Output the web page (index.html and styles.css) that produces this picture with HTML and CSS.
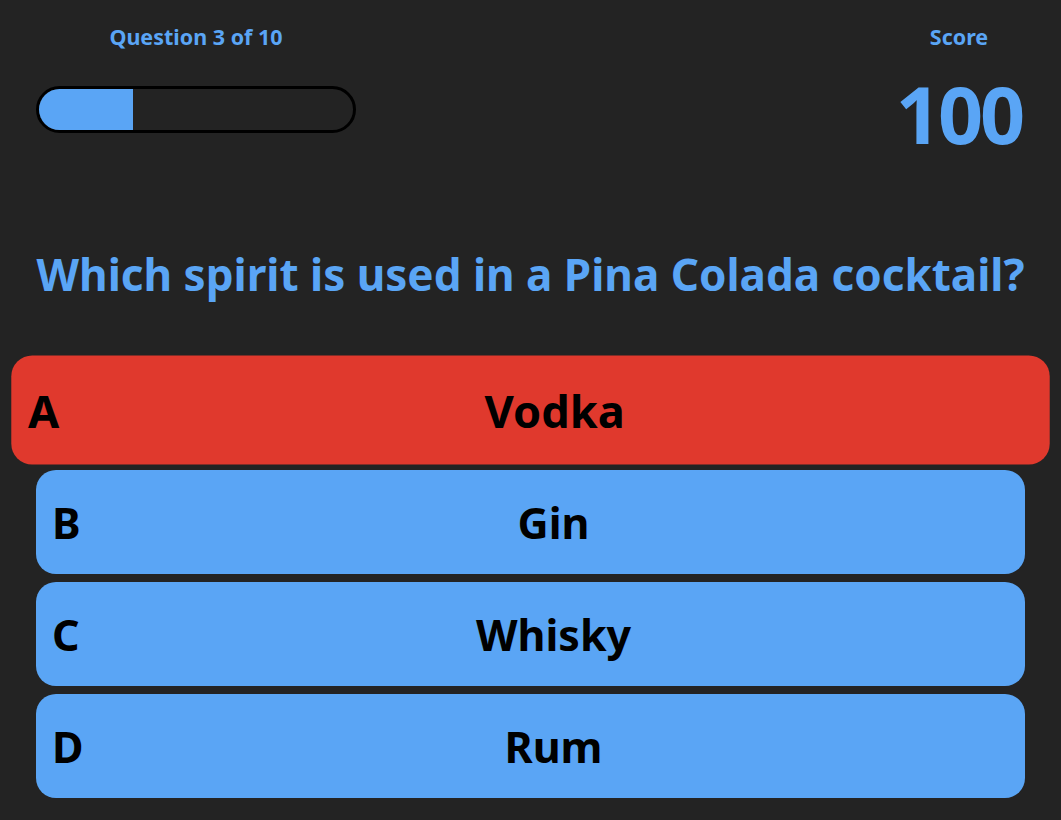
FILE: index.html
```html
<!DOCTYPE html>
<html lang="en">
<head>
<meta charset="utf-8">
<title>Quiz</title>
<link rel="stylesheet" href="styles.css">
</head>
<body>
<div class="quiz">
  <header class="top">
    <div class="progress-col">
      <div class="label">Question 3 of 10</div>
      <div class="bar"><div class="fill" style="width:30%"></div></div>
    </div>
    <div class="score-col">
      <div class="label">Score</div>
      <div class="score">100</div>
    </div>
  </header>
  <h1 class="question">Which spirit is used in a Pina Colada cocktail?</h1>
  <div class="answers">
    <button class="answer selected"><span class="letter">A</span><span class="text">Vodka</span></button>
    <button class="answer"><span class="letter">B</span><span class="text">Gin</span></button>
    <button class="answer"><span class="letter">C</span><span class="text">Whisky</span></button>
    <button class="answer"><span class="letter">D</span><span class="text">Rum</span></button>
  </div>
</div>
</body>
</html>
```
FILE: styles.css
```css
html, body {
  margin: 0;
  padding: 0;
  background: #232323;
  height: 100%;
}
body {
  font-family: "Noto Sans", "DejaVu Sans", sans-serif;
  color: #5aa5f5;
}
.quiz {
  padding: 0 36px;
}
.top {
  display: flex;
  justify-content: space-between;
  align-items: flex-start;
  padding-top: 24px;
}
.label {
  font-size: 21.5px;
  font-weight: 700;
  line-height: 26px;
  text-align: center;
}
.progress-col {
  width: 320px;
}
.bar {
  margin-top: 36px;
  height: 41px;
  border: 3px solid #000;
  border-radius: 24px;
  overflow: hidden;
  background: #232323;
}
.fill {
  height: 100%;
  background: #5aa5f5;
}
.score-col {
  width: 132px;
  text-align: center;
}
.score {
  margin-top: 24px;
  font-size: 79px;
  font-weight: 700;
  line-height: 80px;
  letter-spacing: -3px;
}
.question {
  margin: 90px 0 0;
  font-size: 44px;
  font-weight: 700;
  line-height: 60px;
  text-align: center;
  white-space: nowrap;
}
.answers {
  display: flex;
  flex-direction: column;
  gap: 8px;
  margin-top: 54px;
}
.answer {
  display: flex;
  align-items: center;
  height: 104px;
  border: none;
  border-radius: 20px;
  background: #5aa5f5;
  padding: 0 16px;
  font-family: inherit;
  font-size: 43px;
  font-weight: 700;
  color: #000;
}
.answer.selected {
  background: #e0392d;
  transform: scale(1.05);
}
.letter {
  width: 46px;
  text-align: left;
}
.text {
  flex: 1;
  text-align: center;
}
```
